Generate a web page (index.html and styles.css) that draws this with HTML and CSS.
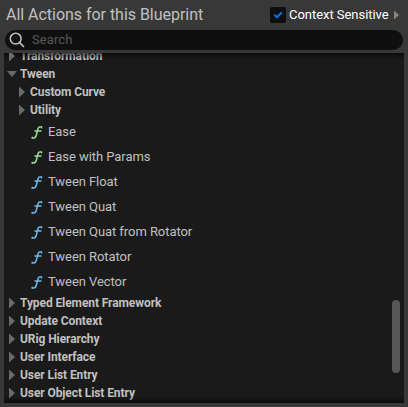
FILE: index.html
```
<!DOCTYPE html>
<html lang="en">
<head>
<meta charset="utf-8">
<title>Blueprint actions</title>
<link rel="stylesheet" href="styles.css">
</head>
<body>
<svg width="0" height="0" class="defs">
  <symbol id="fn" viewBox="0 0 12 14">
    <path d="M10.6 2.1H8.8Q7.4 2.1 7 3.8L5.3 10.2Q4.6 12.9 2.8 12.9H1.2M4 5.9H10" fill="none" stroke="currentColor" stroke-width="1.5" stroke-linecap="round"/>
    <path d="M10.6 2.1V2.9M1.2 12.9V12" fill="none" stroke="currentColor" stroke-width="1.2" stroke-linecap="round"/>
  </symbol>
</svg>
<main class="window">
  <header class="header">
    <h1 class="title">All Actions for this Blueprint</h1>
    <span class="check"><svg width="16" height="16" viewBox="0 0 16 16"><path d="M4.8 8.3L7 10.3L11.2 6" fill="none" stroke="#0a70e4" stroke-width="2.1" stroke-linecap="round" stroke-linejoin="round"/></svg></span>
    <span class="check-label">Context Sensitive</span>
    <span class="arrow arrow-more"></span>
  </header>
  <div class="search">
    <svg width="16" height="16" viewBox="0 0 16 16"><circle cx="6.7" cy="6.7" r="5.4" fill="none" stroke="#c4c4c4" stroke-width="1.5"/><path d="M10.6 10.6L15 15" stroke="#c4c4c4" stroke-width="1.6"/></svg>
    <span class="placeholder">Search</span>
  </div>
  <div class="panel">
    <ul class="tree">
      <li class="group"><span class="arrow"></span><b>Transformation</b></li>
      <li class="group"><span class="arrow open"></span><b>Tween</b></li>
      <li class="group nested"><span class="arrow"></span><b>Custom Curve</b></li>
      <li class="group nested"><span class="arrow"></span><b>Utility</b></li>
      <li class="item pure"><svg width="12" height="14"><use href="#fn"/></svg><span>Ease</span></li>
      <li class="item pure"><svg width="12" height="14"><use href="#fn"/></svg><span>Ease with Params</span></li>
      <li class="item"><svg width="12" height="14"><use href="#fn"/></svg><span>Tween Float</span></li>
      <li class="item"><svg width="12" height="14"><use href="#fn"/></svg><span>Tween Quat</span></li>
      <li class="item"><svg width="12" height="14"><use href="#fn"/></svg><span>Tween Quat from Rotator</span></li>
      <li class="item"><svg width="12" height="14"><use href="#fn"/></svg><span>Tween Rotator</span></li>
      <li class="item"><svg width="12" height="14"><use href="#fn"/></svg><span>Tween Vector</span></li>
      <li class="group"><span class="arrow"></span><b>Typed Element Framework</b></li>
      <li class="group"><span class="arrow"></span><b>Update Context</b></li>
      <li class="group"><span class="arrow"></span><b>URig Hierarchy</b></li>
      <li class="group"><span class="arrow"></span><b>User Interface</b></li>
      <li class="group"><span class="arrow"></span><b>User List Entry</b></li>
      <li class="group"><span class="arrow"></span><b>User Object List Entry</b></li>
    </ul>
    <div class="scrollbar"><div class="thumb"></div></div>
  </div>
</main>
</body>
</html>
```
FILE: styles.css
```
* { box-sizing: border-box; }
body {
  margin: 0;
  background: #383838;
  font-family: Roboto, "Liberation Sans", sans-serif;
  color: #c0c0c0;
}
.defs { display: block; }
.window {
  width: 408px;
  height: 407px;
  padding: 0 4px 4px;
  display: flex;
  flex-direction: column;
  overflow: hidden;
}
.header {
  height: 30px;
  flex: none;
  display: flex;
  align-items: center;
  padding: 0 5px 0 2px;
  white-space: nowrap;
}
.title {
  margin: 0;
  flex: 1;
  font-size: 16px;
  font-weight: 400;
  line-height: 28px;
  letter-spacing: -.03px;
}
.check {
  width: 16px;
  height: 16px;
  border-radius: 2px;
  background: #0f0f0f;
}
.check svg { display: block; }
.check-label {
  width: 105px;
  margin-left: 3px;
  font-size: 13px;
  line-height: 16px;
  padding-bottom: 1px;
  letter-spacing: -.04px;
  color: #fff;
}
.search {
  height: 20px;
  flex: none;
  margin: 0 1px 3px;
  padding-left: 4px;
  display: flex;
  align-items: center;
  gap: 7px;
  border-radius: 10px;
  background: #0f0f0f;
}
.placeholder { font-size: 13px; color: #575757; letter-spacing: .1px; padding-bottom: 1px; }
.panel {
  position: relative;
  height: 350px;
  display: flex;
  background: #1a1a1a;
  overflow: hidden;
}
.panel::before, .panel::after {
  content: "";
  position: absolute;
  left: 0;
  right: 0;
  height: 6px;
}
.panel::before { top: 0; background: linear-gradient(#0009, #0000); }
.panel::after { bottom: 0; background: linear-gradient(#0000, #0009); }
.tree {
  list-style: none;
  flex: 1;
  margin: -6px 0 0;
  padding: 0;
}
.group {
  height: 18px;
  display: flex;
  align-items: center;
  padding-left: 5px;
  font-size: 12px;
  letter-spacing: -.09px;
  white-space: nowrap;
}
.nested { padding-left: 15px; }
.group b { margin-left: 5px; }
.arrow {
  width: 6px;
  height: 11px;
  background: #6a6a6a;
  clip-path: polygon(0 0, 100% 50%, 0 100%);
}
.open {
  width: 10px;
  height: 6px;
  margin: 0 -2px;
  clip-path: polygon(0 0, 100% 0, 50% 100%);
}
.arrow-more { width: 5px; height: 9px; background: #858585; }
.item {
  height: 25px;
  display: flex;
  align-items: center;
  gap: 5px;
  padding-left: 27px;
  font-size: 13px;
  letter-spacing: -.06px;
  color: #6bb8ea;
}
.item span { color: #c0c0c0; }
.pure { color: #94df94; }
.scrollbar { width: 12px; padding-top: 247px; }
.thumb {
  width: 8px;
  height: 73px;
  border-radius: 4px;
  background: #575757;
}
```
